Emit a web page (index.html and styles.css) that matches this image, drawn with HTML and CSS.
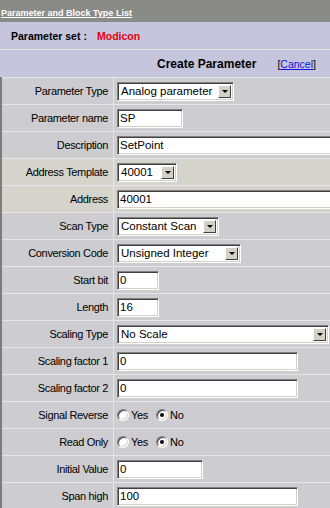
FILE: index.html
```html
<!DOCTYPE html>
<html lang="en">
<head>
    <meta charset="UTF-8">
    <title>Parameter and Block Type List</title>
    <link rel="stylesheet" href="styles.css">
</head>
<body>
    <div class="page">
        <div class="topbar"><a href="#">Parameter and Block Type List</a></div>

        <div class="set-row">
            <span class="set-label">Parameter set :</span>
            <span class="set-name">Modicon</span>
        </div>

        <div class="create-row">
            <span class="create-title">Create Parameter</span>
            <span class="cancel">[<a href="#">Cancel</a>]</span>
        </div>

        <div class="form">
            <div class="label">Parameter Type</div>
            <div class="field">
                <span class="select w-type"><span class="select-text">Analog parameter</span><span class="select-btn"></span></span>
            </div>

            <div class="label">Parameter name</div>
            <div class="field"><input class="text w-name" type="text" value="SP"></div>

            <div class="label">Description</div>
            <div class="field"><input class="text w-wide" type="text" value="SetPoint"></div>

            <div class="label alt">Address Template</div>
            <div class="field alt">
                <span class="select w-addr"><span class="select-text">40001</span><span class="select-btn"></span></span>
            </div>

            <div class="label alt">Address</div>
            <div class="field alt"><input class="text w-wide" type="text" value="40001"></div>

            <div class="label">Scan Type</div>
            <div class="field">
                <span class="select w-scan"><span class="select-text">Constant Scan</span><span class="select-btn"></span></span>
            </div>

            <div class="label">Conversion Code</div>
            <div class="field">
                <span class="select w-conv"><span class="select-text">Unsigned Integer</span><span class="select-btn"></span></span>
            </div>

            <div class="label">Start bit</div>
            <div class="field"><input class="text w-bit" type="text" value="0"></div>

            <div class="label">Length</div>
            <div class="field"><input class="text w-bit" type="text" value="16"></div>

            <div class="label">Scaling Type</div>
            <div class="field">
                <span class="select w-scale"><span class="select-text">No Scale</span><span class="select-btn"></span></span>
            </div>

            <div class="label">Scaling factor 1</div>
            <div class="field"><input class="text w-long" type="text" value="0"></div>

            <div class="label">Scaling factor 2</div>
            <div class="field"><input class="text w-long" type="text" value="0"></div>

            <div class="label">Signal Reverse</div>
            <div class="field radios">
                <span class="radio"></span><span class="radio-text">Yes</span>
                <span class="radio checked"></span><span class="radio-text">No</span>
            </div>

            <div class="label">Read Only</div>
            <div class="field radios">
                <span class="radio"></span><span class="radio-text">Yes</span>
                <span class="radio checked"></span><span class="radio-text">No</span>
            </div>

            <div class="label">Initial Value</div>
            <div class="field"><input class="text w-init" type="text" value="0"></div>

            <div class="label">Span high</div>
            <div class="field"><input class="text w-long" type="text" value="100"></div>
        </div>
    </div>
</body>
</html>
```

FILE: styles.css
```css
:root {
    --bar: #8a8b86;
    --head: #c5c5dd;
    --row: #cdccd1;
    --row-alt: #d4d4cc;
    --line: #e6e6ea;
}

html, body {
    margin: 0;
    overflow: hidden;
}

body {
    font-family: 'Liberation Sans', Arial, sans-serif;
    color: #000;
    background: var(--line);
}

.page {
    width: 330px;
    background: var(--line);
}

.topbar {
    height: 22px;
    background: var(--bar);
    padding-left: 1px;
    line-height: 22px;
}

.topbar a {
    color: #fff;
    font-size: 9px;
    font-weight: bold;
}

.set-row {
    height: 27px;
    background: var(--head);
    display: flex;
    align-items: center;
    padding-left: 11px;
    font-size: 10.5px;
    font-weight: bold;
    margin-bottom: 1px;
}

.set-label {
    width: 86px;
}

.set-name {
    color: #e8000c;
}

.create-row {
    height: 27px;
    background: var(--head);
    display: flex;
    align-items: center;
    padding-left: 157px;
}

.create-title {
    font-size: 12px;
    font-weight: bold;
}

.cancel {
    margin-left: 21px;
    font-size: 10.5px;
}

.cancel a {
    color: #1010e0;
}

.form {
    display: grid;
    grid-template-columns: 111px 1fr;
    grid-auto-rows: 26px;
    gap: 1px;
    padding-top: 1px;
    border-left: 2px solid #7c7c7c;
}

.label {
    background: var(--row);
    display: flex;
    align-items: center;
    justify-content: flex-end;
    padding-right: 5px;
    font-size: 11px;
    letter-spacing: -0.35px;
}

.field {
    background: var(--row);
    display: flex;
    align-items: center;
    padding-left: 3px;
    overflow: hidden;
}

.alt {
    background: var(--row-alt);
}

/* classic sunken inputs */
.text,
.select {
    flex-shrink: 0;
    box-sizing: border-box;
    height: 19px;
    border: 1px solid;
    border-color: #808080 #fff #fff #808080;
    box-shadow: inset 1px 1px 0 #404040, inset -1px -1px 0 #d4d0c8;
    background: #fff;
    font-family: 'Liberation Sans', Arial, sans-serif;
    font-size: 11.5px;
    color: #000;
}

.text {
    padding: 0 2px;
    margin: 0;
    outline: none;
}

.select {
    display: inline-flex;
    align-items: center;
    padding: 2px;
}

.select-text {
    flex: 1;
    padding-left: 1px;
    white-space: nowrap;
    overflow: hidden;
}

.select-btn {
    width: 13px;
    height: 13px;
    box-sizing: border-box;
    background: #d4d0c8;
    border: 1px solid;
    border-color: #fff #404040 #404040 #fff;
    display: flex;
    align-items: center;
    justify-content: center;
}

.select-btn::after {
    content: '';
    border-left: 3px solid transparent;
    border-right: 3px solid transparent;
    border-top: 3px solid #000;
}

.w-type { width: 117px; }
.w-addr { width: 60px; }
.w-scan { width: 102px; }
.w-conv { width: 124px; }
.w-scale { width: 212px; }
.w-name { width: 66px; }
.w-wide { width: 240px; }
.w-bit { width: 42px; }
.w-long { width: 181px; }
.w-init { width: 86px; }

.radios {
    gap: 2px;
    font-size: 11px;
    letter-spacing: -0.3px;
}

.radio {
    width: 12px;
    height: 12px;
    box-sizing: border-box;
    border-radius: 50%;
    border: 1px solid;
    border-color: #808080 #fff #fff #808080;
    box-shadow: inset 1px 1px 0 #404040, inset -1px -1px 0 #d4d0c8;
    background: #fff;
    display: flex;
    align-items: center;
    justify-content: center;
}

.radio.checked::after {
    content: '';
    width: 4px;
    height: 4px;
    border-radius: 50%;
    background: #000;
}

.radio-text {
    margin-right: 6px;
}
```
